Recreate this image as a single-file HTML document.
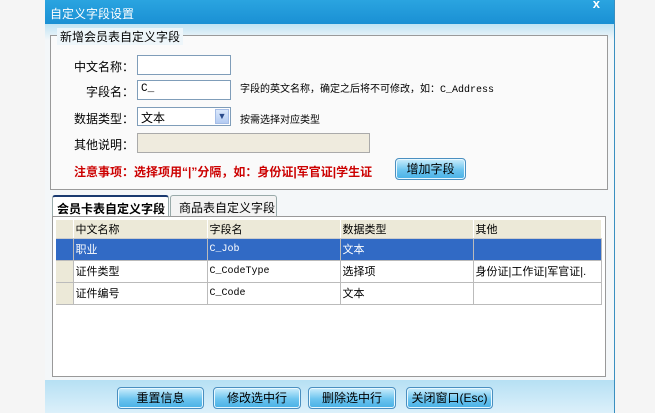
<!DOCTYPE html>
<html><head><meta charset="utf-8"><style>
*{margin:0;padding:0;box-sizing:border-box}
body{width:655px;height:413px;background:#f5f5f5;position:relative;overflow:hidden;font-family:"Liberation Sans","Noto Sans CJK SC",sans-serif;font-size:12px;color:#000}
.win{position:absolute;left:45px;top:0;width:570px;height:413px;background:#f4f7f9;border-right:1px solid #3a8fc0}
.title{position:absolute;left:45px;top:0;width:569px;height:24px;background:linear-gradient(#2aa4e0,#1a90d4);color:#fff;font-size:12px;padding:5px 0 0 5px}
.x{position:absolute;right:14px;top:-4px;color:#fff;font-weight:bold;font-size:13px}
.band{position:absolute;left:45px;top:24px;width:569px;height:16px;background:linear-gradient(#bfe3f4,#f4f7f9)}
.grp{position:absolute;left:50px;top:35px;width:558px;height:155px;border:1px solid #9a9a9a;background:#fafafa}
.grp .leg{position:absolute;left:6px;top:-8px;background:#eef6fa;padding:0 3px;font-size:12px}
.a{position:absolute;font-size:12px;white-space:nowrap}
.in{position:absolute;background:#fff;border:1px solid #7f9db9}
.red{color:#c00;font-weight:bold}
.btn{position:absolute;border:1px solid #4a8fc0;border-radius:4px;background:linear-gradient(#cdeefc,#6cc4ef 55%,#48b0e6);text-align:center;font-size:12px;line-height:20px;white-space:nowrap;box-shadow:inset 0 0 0 1px #e8f8ff}
.tab{position:absolute;top:195px;height:22px;border:1px solid #9aa;border-bottom:none;border-radius:3px 3px 0 0;font-size:12px;padding:3px 0 0 5px;background:#f3f3f3;white-space:nowrap;overflow:hidden}
.grid{position:absolute;left:52px;top:216px;width:554px;height:161px;border:1px solid #999;background:#fff}
table{position:absolute;left:3px;top:3px;border-collapse:collapse;font-size:11px;table-layout:fixed}
td{height:21px;border-right:1px solid #bbb;border-bottom:1px solid #bbb;padding-left:2px;white-space:nowrap;overflow:hidden;vertical-align:middle}
tr.h td{background:#ece9d8;height:18px;border-bottom:1px solid #ccc;border-right:1px solid #fff}
tr.s td{background:#316ac5;color:#fff}
td.rh{background:#ece9d8;padding:0}
.mono{font-family:"Liberation Mono","Noto Sans CJK SC",monospace;font-size:10px;line-height:21px}
.bot{position:absolute;left:45px;top:380px;width:569px;height:33px;background:linear-gradient(#b6e0f4,#dcf0fa)}
</style></head><body>
<div class="win"></div>
<div class="title">自定义字段设置<span class="x">x</span></div>
<div class="band"></div>
<div class="grp"><span class="leg">新增会员表自定义字段</span></div>
<div class="a" style="left:74px;top:58px">中文名称：</div>
<div class="in" style="left:137px;top:55px;width:94px;height:20px"></div>
<div class="a" style="left:86px;top:83px">字段名：</div>
<div class="in" style="left:137px;top:80px;width:94px;height:20px;padding:2px 3px;font-family:'Liberation Mono',monospace;font-size:11px">C_</div>
<div class="a mono" style="left:240px;top:80px">字段的英文名称，确定之后将不可修改，如：C_Address</div>
<div class="a" style="left:74px;top:110px">数据类型：</div>
<div class="in" style="left:137px;top:107px;width:94px;height:19px;padding:1px 3px">文本<span style="position:absolute;right:1px;top:1px;width:14px;height:15px;background:linear-gradient(#dbe8fb,#b3cbf2);border:1px solid #a5bde6;font-size:9px;line-height:13px;text-align:center;color:#2a4a8a">▼</span></div>
<div class="a" style="left:240px;top:111px;font-size:10px">按需选择对应类型</div>
<div class="a" style="left:74px;top:136px">其他说明：</div>
<div class="in" style="left:137px;top:133px;width:233px;height:20px;background:#efebde;border-color:#aaa"></div>
<div class="a red" style="left:74px;top:163px">注意事项：选择项用“|”分隔，如：身份证|军官证|学生证</div>
<div class="btn" style="left:395px;top:158px;width:71px;height:22px">增加字段</div>
<div class="tab" style="left:52px;width:117px;background:#fff;border-top:2px solid #1a3a70;font-weight:bold;padding-left:4px">会员卡表自定义字段</div>
<div class="tab" style="left:170px;width:107px;padding-left:8px">商品表自定义字段</div>
<div class="grid">
<table>
<col style="width:17px"><col style="width:134px"><col style="width:133px"><col style="width:133px"><col style="width:128px">
<tr class="h"><td class="rh"></td><td>中文名称</td><td>字段名</td><td>数据类型</td><td>其他</td></tr>
<tr class="s"><td class="rh"></td><td>职业</td><td class="mono">C_Job</td><td>文本</td><td></td></tr>
<tr><td class="rh"></td><td>证件类型</td><td class="mono">C_CodeType</td><td>选择项</td><td>身份证|工作证|军官证|.</td></tr>
<tr><td class="rh"></td><td>证件编号</td><td class="mono">C_Code</td><td>文本</td><td></td></tr>
</table>
</div>
<div class="bot"></div>
<div class="btn" style="left:117px;top:387px;width:87px;height:22px">重置信息</div>
<div class="btn" style="left:213px;top:387px;width:88px;height:22px">修改选中行</div>
<div class="btn" style="left:308px;top:387px;width:88px;height:22px">删除选中行</div>
<div class="btn" style="left:406px;top:387px;width:87px;height:22px">关闭窗口(Esc)</div>
</body></html>
